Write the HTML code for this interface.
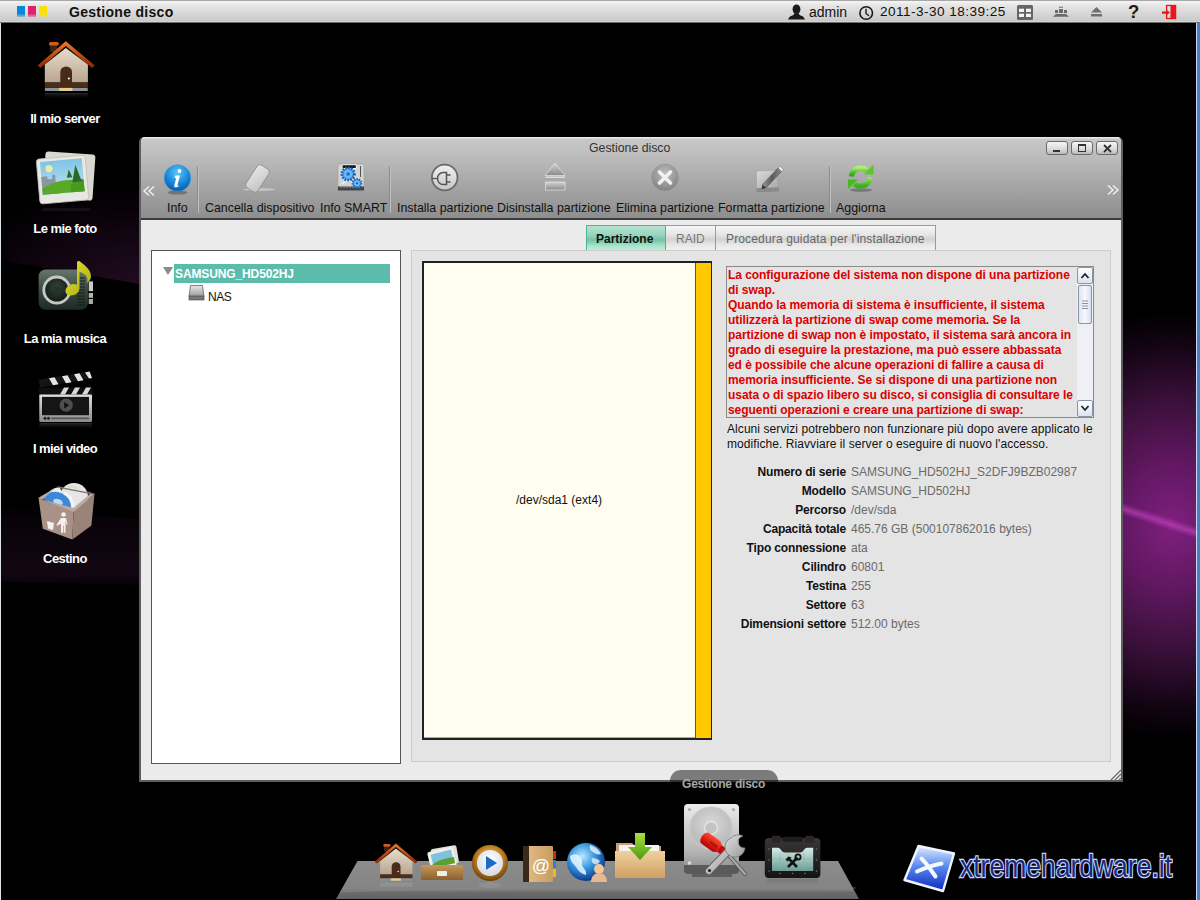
<!DOCTYPE html>
<html><head><meta charset="utf-8">
<style>
*{margin:0;padding:0;box-sizing:border-box}
html,body{width:1200px;height:900px;overflow:hidden;background:#000;font-family:"Liberation Sans",sans-serif}
.a{position:absolute}
svg{position:absolute;overflow:visible}
#bg{left:0;top:0;width:1200px;height:900px;background:#000}
#topbar{left:0;top:0;width:1200px;height:23px;background:linear-gradient(#a8a8a8 0,#a8a8a8 1px,#f4f4f4 1px,#e4e4e4 6px,#cacaca 21px,#dcdcdc 22px,#000 23px)}
.tt{font-size:14px;line-height:16px;color:#111;white-space:nowrap}
.dl{color:#fff;font-weight:bold;font-size:13px;letter-spacing:-0.55px;line-height:15px;width:130px;text-align:center;left:0;white-space:nowrap}
#win{left:139px;top:137px;width:984px;height:645px;background:#ebebeb;border:2px solid #5e5e5e;border-top:none;border-radius:5px 5px 0 0;overflow:hidden}
#tb{left:0;top:0;width:980px;height:83px;background:linear-gradient(#e8e8e8 0,#e8e8e8 1px,#c8c8c8 2px,#c2c2c2 12px,#a8a8a8 45px,#8e8e8e 81px,#3c3c3c 81px);border-radius:5px 5px 0 0}
.tl{font-size:12.4px;letter-spacing:0 !important;line-height:15px;color:#111;white-space:nowrap;top:201px}
.sep{width:2px;top:166px;height:47px;border-left:1px solid #8e8e8e;border-right:1px solid #c0c0c0}
.wb{top:141px;width:22px;height:14px;border:1px solid #6a6a6a;border-radius:3px;background:linear-gradient(#f6f6f6,#dadada 60%,#b8b8b8)}
.rt{color:#dc0000;font-weight:bold;font-size:12px;letter-spacing:-0.05px;line-height:15px;white-space:nowrap}
.pl{font-weight:bold;font-size:12px;letter-spacing:-0.15px;color:#111;text-align:right;width:140px;left:706px;line-height:15px;white-space:nowrap}
.pv{font-size:12px;color:#6a6a6a;left:851px;line-height:15px;white-space:nowrap}
</style></head><body>
<div id="bg" class="a"></div>
<!-- purple glow right -->
<div class="a" style="left:1100px;top:260px;width:100px;height:520px;background:radial-gradient(ellipse 180px 215px at 72% 51%,#801f80 0,#621862 28%,#3a103a 58%,#120412 85%,#000 100%)"></div>
<div class="a" style="left:1115px;top:495px;width:85px;height:50px;background:linear-gradient(18deg,transparent 42%,rgba(200,70,200,.6) 50%,transparent 58%)"></div>
<div class="a" style="left:0;top:170px;width:140px;height:114px;clip-path:polygon(0 0,100% 0,100% 100%,0 79%);background:radial-gradient(ellipse 190px 100px at 100% 100%,#200c20 0,#110511 50%,transparent 100%)"></div>
<div class="a" style="left:0;top:503px;width:140px;height:82px;clip-path:polygon(0 0,100% 20%,100% 100%,0 96%);background:linear-gradient(#000,#0a040a 30%,#120712 85%,#070207)"></div>
<!-- left/right screen edges -->
<div class="a" style="left:0;top:0;width:1px;height:900px;background:#dfe3ea"></div>
<div class="a" style="left:1196px;top:0;width:1px;height:900px;background:#cddbf0"></div>
<div class="a" style="left:1197px;top:0;width:3px;height:900px;background:#4b7fc4"></div>

<div id="topbar" class="a"></div>
<!-- topbar icons -->
<svg style="left:788px;top:4px" width="18" height="16"><ellipse cx="8.5" cy="5.3" rx="3.9" ry="4.9" fill="#1a1a1a"/><path d="M6 9.5h5l.5 1.5c2.5.8 4.2 1.8 4.8 3.2l.7 1.3H0l.7-1.3c.6-1.4 2.3-2.4 4.8-3.2z" fill="#1a1a1a"/></svg>
<svg style="left:858px;top:5px" width="17" height="16"><circle cx="8.2" cy="8" r="6.3" fill="none" stroke="#1a1a1a" stroke-width="1.6"/><path d="M8 3.8V8.5l3 2.2" fill="none" stroke="#1a1a1a" stroke-width="1.4"/></svg>
<svg style="left:1016px;top:4px" width="18" height="17"><rect x="1" y="1" width="16" height="15" rx="1.5" fill="#666"/><rect x="3" y="4.7" width="5" height="3.3" fill="#f2f2f2"/><rect x="10" y="4.7" width="5" height="3.3" fill="#f2f2f2"/><rect x="3" y="9.7" width="5" height="3.3" fill="#f2f2f2"/><rect x="10" y="9.7" width="5" height="3.3" fill="#f2f2f2"/></svg>
<svg style="left:1052px;top:5px" width="18" height="13"><rect x="7" y="1.7" width="4" height="1" fill="#6a6a6a"/><rect x="7" y="4" width="4" height="4" fill="#6a6a6a"/><rect x="3" y="5" width="3" height="3" fill="#6a6a6a"/><rect x="12" y="5" width="3" height="3" fill="#6a6a6a"/><path d="M4 9h10l3 2.7H1z" fill="#6a6a6a"/></svg>
<svg style="left:1090px;top:6px" width="14" height="12"><path d="M6.5 1L12 6.5H1z" fill="#707070"/><rect x="1" y="8" width="11" height="2.5" fill="#707070"/></svg>
<div class="a" style="left:1128px;top:2px;font-size:18.5px;font-weight:bold;line-height:19px;color:#1a1a1a">?</div>
<svg style="left:1161px;top:4px" width="17" height="16"><rect x="5.6" y="1.5" width="9" height="13" fill="none" stroke="#e8141e" stroke-width="1.3"/><rect x="9.5" y="1" width="5.5" height="14" fill="#e8141e"/><path d="M1 7.5h4V5.6l4 3-4 3.2V9.8H1z" fill="#e8141e"/></svg>

<!-- color squares -->
<div class="a" style="left:17px;top:6px;width:8px;height:11px;background:linear-gradient(#0a88d8 70%,rgba(10,136,216,.3))"></div>
<div class="a" style="left:28px;top:6px;width:8px;height:11px;background:linear-gradient(#e0206a 70%,rgba(224,32,106,.3))"></div>
<div class="a" style="left:39px;top:6px;width:8px;height:11px;background:linear-gradient(#fde000 70%,rgba(253,224,0,.3))"></div>
<div class="a tt" style="left:69px;top:4px;font-weight:bold;letter-spacing:0.3px">Gestione disco</div>
<div class="a tt" style="left:809px;top:4px">admin</div>
<div class="a tt" style="left:880px;top:4px;font-size:13.6px;letter-spacing:0.45px">2011-3-30 18:39:25</div>

<!-- desktop icons -->
<svg style="left:34px;top:38px" width="64" height="66">
 <defs>
  <linearGradient id="hr" x1="0" y1="0" x2="0" y2="1"><stop offset="0" stop-color="#f07a28"/><stop offset="1" stop-color="#8a2404"/></linearGradient>
  <linearGradient id="hb" x1="0" y1="0" x2="0" y2="1"><stop offset="0" stop-color="#e8dccb"/><stop offset="1" stop-color="#b8a690"/></linearGradient>
  <linearGradient id="hf" x1="0" y1="0" x2="0" y2="1"><stop offset="0" stop-color="#444" stop-opacity=".6"/><stop offset="1" stop-color="#000" stop-opacity="0"/></linearGradient>
 </defs>
 <rect x="16" y="7" width="7" height="7" fill="#3a2418"/>
 <rect x="15" y="4" width="9.8" height="3.5" rx="1.5" fill="#d05a20"/>
 <path d="M10.8 26.5L31.8 10 53.9 26.5V44.4H10.8z" fill="url(#hb)"/>
 <rect x="10.8" y="44.4" width="43.1" height="5.5" fill="#4a2e1a"/>
 <rect x="10.8" y="49.9" width="43.1" height="3.1" rx="1" fill="#8a929a"/>
 <rect x="25.2" y="49.9" width="13.2" height="3.1" fill="#e4cc90"/>
 <path d="M26.3 49V34a5.8 5.5 0 0 1 11.7 0v15z" fill="#4a2a18"/>
 <circle cx="34.9" cy="40.5" r="1" fill="#fff"/>
 <path d="M3.5 27.5L31.8 3.2 60.8 27.5 58 30 31.8 8 6.5 30z" fill="url(#hr)"/>
 <rect x="10.8" y="55" width="43.1" height="6" fill="url(#hf)"/>
</svg>
<svg style="left:34px;top:150px" width="64" height="64">
 <defs><linearGradient id="ps" x1="0" y1="0" x2="0" y2="1"><stop offset="0" stop-color="#7ec4e4"/><stop offset="1" stop-color="#bfe4f0"/></linearGradient></defs>
 <rect x="10" y="3" width="50" height="46" rx="3" fill="#d8d8d0" transform="rotate(4 35 26)"/>
 <g transform="rotate(-5 29 29)">
 <rect x="4" y="7" width="49" height="45" rx="3" fill="#e8e8e2" stroke="#c0c0b8" stroke-width=".8"/>
 <rect x="7.5" y="10" width="42" height="33" fill="url(#ps)"/>
 <circle cx="16" cy="17.5" r="3.5" fill="#f0eca8"/>
 <path d="M7.5 25h6v3h5v-4h3v8l4 3v8H7.5z" fill="#8a96a0"/>
 <path d="M7.5 43V37c10-6 24-8 42-5v11z" fill="#5aa828"/>
 <path d="M36 36c4-4 9-6 13.5-5v12H36z" fill="#4a9a20"/>
 <path d="M38 33l4.5-17 5 17z" fill="#2a6a28"/><path d="M33 28l2.5-8 3 8z" fill="#2a6a28"/>
 </g>
 <rect x="8" y="58" width="48" height="3" fill="#333" opacity=".3"/>
</svg>
<svg style="left:34px;top:259px" width="64" height="64">
 <defs><linearGradient id="rb" x1="0" y1="0" x2="0" y2="1"><stop offset="0" stop-color="#66766c"/><stop offset=".5" stop-color="#3a4a40"/><stop offset="1" stop-color="#1e2a24"/></linearGradient>
 <radialGradient id="rs" cx="50%" cy="40%" r="55%"><stop offset="0" stop-color="#34443a"/><stop offset="1" stop-color="#121c18"/></radialGradient>
 <linearGradient id="ny" x1="0" y1="0" x2="1" y2="1"><stop offset="0" stop-color="#e4e430"/><stop offset="1" stop-color="#a8a810"/></linearGradient></defs>
 <rect x="4.6" y="10.4" width="49.3" height="40.4" rx="7" fill="url(#rb)"/>
 <circle cx="22.8" cy="31" r="13" fill="url(#rs)" stroke="#c4c8c4" stroke-width="2.8"/>
 <circle cx="22.8" cy="31" r="3.4" fill="#26322c"/>
 <path d="M43 19h8M43 22h8M43 25h8M43 28h8M43 31h8M43 34h8M43 37h8M43 40h8M43 43h8M43 46h8" stroke="#141c18" stroke-width="1.2"/>
 <rect x="54.7" y="22.4" width="4.3" height="9.8" fill="#c8ccc8"/><rect x="54.7" y="34" width="4.3" height="4.8" fill="#b4b8b4"/><rect x="54.7" y="40" width="4.3" height="5" fill="#a4a8a4"/>
 <path d="M43 3.5c.5-1.5 2-1.8 3-1 5 4 11 8 11 15 0 3-2 5-4 6.5 1-4 0-7-3-9-2-1.5-4-2-4.5-2v16c0 4.5-4 7.5-8.5 7.5-3.5 0-5.5-2-5.5-4.5 0-4 4.5-7 8-7 1.3 0 2.5.3 3.5.8z" fill="url(#ny)"/>
</svg>
<svg style="left:34px;top:369px" width="64" height="66">
 <defs><linearGradient id="vf" x1="0" y1="0" x2="0" y2="1"><stop offset="0" stop-color="#e0e0e0"/><stop offset="1" stop-color="#8a8a8a"/></linearGradient>
 <linearGradient id="vr" x1="0" y1="0" x2="0" y2="1"><stop offset="0" stop-color="#555" stop-opacity=".5"/><stop offset="1" stop-color="#000" stop-opacity="0"/></linearGradient></defs>
 <path d="M4.6 10.8L56.7 2.2 58.2 9.2 6.1 18.6z" fill="#151515"/>
 <path d="M15 9.3l5.5-1 4 7-5.5 1zM28 7.2l5.5-1 4 7-5.5 1zM40 5.2l5.5-1 4 7-5.5 1zM51 3.4l4.5-.8 2.5 6.4-3 .5z" fill="#e4e4e4"/>
 <rect x="4.6" y="18.6" width="54" height="7" fill="#101010"/>
 <path d="M26 25.5l4-6.9h5l-4 6.9zM37 25.5l4-6.9h5l-4 6.9zM48 25.5l4-6.9h5l-4 6.9z" fill="#d8d8d8"/>
 <rect x="5.3" y="25.5" width="52.7" height="27.5" rx="1" fill="url(#vf)"/>
 <rect x="8" y="27.9" width="47" height="18.3" fill="#151515"/>
 <circle cx="32.2" cy="36.2" r="6.6" fill="#4e4e4e"/>
 <path d="M30.2 33v6.4l5-3.2z" fill="#111"/>
 <circle cx="11" cy="49.3" r="1.5" fill="#222"/><circle cx="14.5" cy="49.3" r="1.5" fill="#222"/>
 <rect x="17" y="48.5" width="38" height="1.6" fill="#555"/>
 <rect x="5.3" y="54" width="52.7" height="7" fill="url(#vr)"/>
</svg>
<svg style="left:34px;top:479px" width="64" height="66">
 <path d="M8 19L24 7 58 13 40 29z" fill="#3a2e2a"/>
 <path d="M14 14c3-4 8-6 12-5l4 9-14 5z" fill="#f0f0f0"/>
 <circle cx="40" cy="18" r="14" fill="#e6e6ea"/>
 <path d="M34 8a12 12 0 0 1 10 2" stroke="#c8e0a0" stroke-width="2" fill="none" opacity=".7"/>
 <path d="M9 20c3-6 10-9 18-6 6 2 10 8 10 14l-6 4z" fill="#3a88d8"/>
 <ellipse cx="24" cy="23" rx="5" ry="3" transform="rotate(20 24 23)" fill="#bcd8f4"/>
 <path d="M30 14c5 2 9 7 9 14" stroke="#f4f4f4" stroke-width="3" fill="none"/>
 <path d="M4.6 19.3L39.5 32.5 38.4 60.5 8.8 49.7z" fill="#a89288"/>
 <path d="M39.5 32.5L60.5 14.7 57.4 46.5 38.4 60.5z" fill="#9a847a"/>
 <path d="M4 19L22 8.5 8.5 20.5 39.5 29 56 15 60.8 14.5 39.5 33z" fill="#bca89e"/>
 <path d="M22 8.5L24 7.5 60.8 14.5 56 15z" fill="#8a766e"/>
 <circle cx="29.5" cy="35.5" r="2.3" fill="#f4f0ee"/>
 <path d="M27 39h5l1.5 6.5-1 .3-1-4v12h-1.8v-7h-.7v7H27v-9l-4 2-.4-1z" fill="#f4f0ee"/>
 <path d="M13 42l7 2-1 7-5-1.5z" fill="#f4f0ee"/>
</svg>

<div class="a dl" style="top:111px">Il mio server</div>
<div class="a dl" style="top:221px">Le mie foto</div>
<div class="a dl" style="top:331px">La mia musica</div>
<div class="a dl" style="top:441px">I miei video</div>
<div class="a dl" style="top:551px">Cestino</div>

<div id="win" class="a"><div id="tb" class="a"></div></div>
<!-- window title & buttons -->
<div class="a" style="left:589px;top:141px;font-size:12.3px;line-height:15px;color:#333;white-space:nowrap">Gestione disco</div>
<div class="a wb" style="left:1046px"></div>
<div class="a wb" style="left:1071px"></div>
<div class="a wb" style="left:1096px"></div>
<div class="a" style="left:1053px;top:150px;width:7px;height:2px;background:#333"></div>
<div class="a" style="left:1078px;top:144px;width:8px;height:8px;border:1px solid #333;border-top-width:2px"></div>
<svg style="left:1103px;top:144px" width="9" height="9"><path d="M1 1L8 8M8 1L1 8" stroke="#333" stroke-width="1.8"/></svg>
<!-- toolbar arrows -->
<svg style="left:142px;top:185px" width="16" height="12"><path d="M7 1.5L2 6l5 4.5M12 1.5L7 6l5 4.5" fill="none" stroke="#f2f2f2" stroke-width="1.4"/></svg>
<svg style="left:1105px;top:184px" width="16" height="12"><path d="M3 1.5L8 6l-5 4.5M8 1.5l5 4.5-5 4.5" fill="none" stroke="#f2f2f2" stroke-width="1.4"/></svg>
<!-- separators -->
<div class="a sep" style="left:197px"></div>
<div class="a sep" style="left:389px"></div>
<div class="a sep" style="left:829px"></div>
<!-- toolbar labels -->
<div class="a tl" style="left:167px">Info</div>
<div class="a tl" style="left:205px;letter-spacing:0.2px">Cancella dispositivo</div>
<div class="a tl" style="left:320px;letter-spacing:0.1px">Info SMART</div>
<div class="a tl" style="left:397px;letter-spacing:0.15px">Installa partizione</div>
<div class="a tl" style="left:497px;letter-spacing:0.15px">Disinstalla partizione</div>
<div class="a tl" style="left:616px;letter-spacing:0.15px">Elimina partizione</div>
<div class="a tl" style="left:718px;letter-spacing:0.15px">Formatta partizione</div>
<div class="a tl" style="left:836px;letter-spacing:0.2px">Aggiorna</div>
<!-- toolbar icons -->
<svg style="left:160px;top:162px" width="36" height="34">
 <defs><radialGradient id="gi" cx="50%" cy="30%" r="70%"><stop offset="0" stop-color="#5cc8f8"/><stop offset=".6" stop-color="#1a88d8"/><stop offset="1" stop-color="#0a58a8"/></radialGradient></defs>
 <ellipse cx="17.5" cy="30.5" rx="10" ry="2" fill="#555" opacity=".6"/>
 <circle cx="17.5" cy="16" r="13.3" fill="url(#gi)" stroke="#3aa0e0" stroke-width=".6"/>
 <circle cx="19.5" cy="9" r="1.9" fill="#fff"/>
 <path d="M15 13.5h5l-2.6 9.5c-.2.8.4.9 1.3.4l.3.6c-2.2 1.6-5.4 2-4.7-.8l2-7.3h-1.8z" fill="#fff"/>
</svg>
<svg style="left:240px;top:162px" width="40" height="32">
 <defs><linearGradient id="ge" x1="0" y1="0" x2="1" y2="1"><stop offset="0" stop-color="#e6e6e6"/><stop offset="1" stop-color="#c4c4c4"/></linearGradient></defs>
 <ellipse cx="19" cy="27.5" rx="16" ry="1.5" fill="#cfcfcf" opacity=".8"/>
 <rect x="10.5" y="3" width="14" height="27" rx="3.5" transform="rotate(33 17.5 16.5)" fill="url(#ge)" stroke="#8a8a8a" stroke-width=".8"/>
</svg>
<svg style="left:336px;top:162px" width="30" height="30">
 <rect x="2" y="2" width="26" height="26.5" rx="1.5" fill="#d4d4d4" stroke="#9a9a9a" stroke-width=".6"/>
 <rect x="5.8" y="2.5" width="14.8" height="4.2" rx="1" fill="#fff"/>
 <rect x="6.6" y="3.2" width="13.2" height="2.8" fill="#1a1a1a"/>
 <path d="M6 22c3-3 8-4 12-2" stroke="#f4f4f4" stroke-width="1.2" fill="none"/>
 <path d="M24.5 4v11" stroke="#444" stroke-width=".9"/>
 <rect x="2" y="24.5" width="26" height="4" fill="#444"/>
 <path d="M4 25.5h20" stroke="#777" stroke-width="1" stroke-dasharray="2 1"/>
 <circle cx="12.1" cy="12" r="6.3" fill="#4aa0f0" stroke="#1e5eb0" stroke-width="2.6" stroke-dasharray="1.6 1.3"/>
 <circle cx="12.1" cy="12" r="4.2" fill="#6ab8ff"/>
 <circle cx="12.1" cy="12" r="1.8" fill="#2a6ab8"/>
 <circle cx="21" cy="21.3" r="4.3" fill="#4aa0f0" stroke="#1e5eb0" stroke-width="2.2" stroke-dasharray="1.3 1.1"/>
 <circle cx="21" cy="21.3" r="2.6" fill="#7ac0ff"/>
 <circle cx="21" cy="21.3" r="1.2" fill="#2a6ab8"/>
</svg>
<svg style="left:430px;top:163px" width="30" height="30">
 <defs><linearGradient id="gp" x1="0" y1="0" x2="0" y2="1"><stop offset="0" stop-color="#f0f0f0"/><stop offset="1" stop-color="#c8c8c8"/></linearGradient></defs>
 <circle cx="14.7" cy="14.5" r="12.8" fill="url(#gp)" stroke="#6a6a6a" stroke-width="1.8"/>
 <path d="M2 15.5h6" stroke="#555" stroke-width="1.3"/>
 <path d="M16.5 9.5h-3.5a5.5 6 0 0 0 0 12h3.5z" fill="none" stroke="#555" stroke-width="1.5"/>
 <path d="M16.5 12h4M16.5 19h4" stroke="#555" stroke-width="1.5"/>
</svg>
<svg style="left:543px;top:161px" width="26" height="32">
 <defs><linearGradient id="gj" x1="0" y1="0" x2="0" y2="1"><stop offset="0" stop-color="#d4d4d4"/><stop offset="1" stop-color="#8a8a8a"/></linearGradient></defs>
 <path d="M12 2L22 14.5H2z" fill="url(#gj)" stroke="#e0e0e0" stroke-width=".8"/>
 <rect x="2.5" y="15.5" width="19.5" height="1.5" fill="#ddd"/>
 <rect x="2.5" y="21" width="19.5" height="8" fill="url(#gj)" stroke="#e0e0e0" stroke-width=".8"/>
</svg>
<svg style="left:650px;top:163px" width="30" height="30">
 <defs><radialGradient id="gx" cx="50%" cy="35%" r="65%"><stop offset="0" stop-color="#bdbdbd"/><stop offset="1" stop-color="#828282"/></radialGradient></defs>
 <circle cx="15" cy="14.5" r="13.5" fill="url(#gx)" stroke="#9a9a9a" stroke-width=".6"/>
 <path d="M9.5 9L20.5 20M20.5 9L9.5 20" stroke="#f2f2f2" stroke-width="3.6" stroke-linecap="round"/>
</svg>
<svg style="left:754px;top:164px" width="32" height="30">
 <defs><linearGradient id="fd" x1="0" y1="0" x2="1" y2="1"><stop offset="0" stop-color="#dcdcdc"/><stop offset="1" stop-color="#a8a8a8"/></linearGradient>
 <linearGradient id="fp" x1="0" y1="0" x2="1" y2="0"><stop offset="0" stop-color="#9a9a9a"/><stop offset=".5" stop-color="#5a5a5a"/><stop offset="1" stop-color="#8a8a8a"/></linearGradient></defs>
 <path d="M2.5 7L22 6 25 23.5 2.5 24.3z" fill="url(#fd)" stroke="#999" stroke-width=".5"/>
 <path d="M2.5 24.3L25 23.5V27.5L2.5 28.3z" fill="#8a8a8a"/>
 <path d="M6 20c2-5 6-9 12-10" stroke="#c4c4c4" stroke-width="1" fill="none"/>
 <path d="M8.5 20.5L24 4l3.5 3.5L12 24z" fill="url(#fp)" stroke="#555" stroke-width=".6"/>
 <path d="M8.5 20.5L7.5 25l4.5-1z" fill="#333"/>
 <path d="M24 4l2-2 3.5 3.5-2 2z" fill="#e8e8e8" stroke="#777" stroke-width=".5"/>
</svg>
<svg style="left:846px;top:162px" width="30" height="31">
 <defs><linearGradient id="gg" x1="0" y1="0" x2="0" y2="1"><stop offset="0" stop-color="#a8f070"/><stop offset=".5" stop-color="#50c020"/><stop offset="1" stop-color="#2a9a10"/></linearGradient>
 <linearGradient id="gg2" x1="0" y1="0" x2="0" y2="1"><stop offset="0" stop-color="#98e868"/><stop offset="1" stop-color="#38b018"/></linearGradient></defs>
 <ellipse cx="15" cy="28" rx="11" ry="1.8" fill="#444" opacity=".45"/>
 <path d="M5.5 14.5A9.5 9 0 0 1 21 8" fill="none" stroke="url(#gg)" stroke-width="5.2"/>
 <path d="M27.5 2.5V12.5H17.5z" fill="#5ac828"/>
 <path d="M24 15A9.5 9 0 0 1 8.5 22" fill="none" stroke="url(#gg2)" stroke-width="5.2"/>
 <path d="M2 27V17.5H12z" fill="#48b820"/>
</svg>

<!-- left tree panel -->
<div class="a" style="left:151px;top:250px;width:250px;height:514px;background:#fff;border:1px solid #555"></div>
<svg style="left:162px;top:266px" width="12" height="10"><path d="M1 1h10l-5 8z" fill="#8a8a8a"/></svg>
<div class="a" style="left:174px;top:264px;width:216px;height:19px;background:#5cbcab"></div>
<div class="a" style="left:175px;top:267px;font-size:12px;font-weight:bold;letter-spacing:-0.12px;line-height:15px;color:#fff;white-space:nowrap">SAMSUNG_HD502HJ</div>
<svg style="left:188px;top:284px" width="18" height="17">
 <defs><linearGradient id="gd" x1="0" y1="0" x2="0" y2="1"><stop offset="0" stop-color="#e8e8e8"/><stop offset="1" stop-color="#9a9a9a"/></linearGradient></defs>
 <path d="M2.5 1.5h12l1.5 11h-15z" fill="url(#gd)" stroke="#666" stroke-width=".8"/>
 <rect x="1" y="12" width="15" height="4" fill="#777" stroke="#444" stroke-width=".6"/>
</svg>
<div class="a" style="left:208px;top:290px;font-size:12px;letter-spacing:-0.4px;line-height:15px;color:#111">NAS</div>

<!-- tabs -->
<div class="a" style="left:586px;top:225px;width:80px;height:26px;border:1px solid #4fb495;border-bottom:none;background:linear-gradient(#b4e2d0,#9ad6bf 35%,#74c4a4 55%,#a8e4cc 80%,#c4f2de)"></div>
<div class="a" style="left:596px;top:232px;font-size:12px;font-weight:bold;line-height:15px;color:#111">Partizione</div>
<div class="a" style="left:666px;top:225px;width:50px;height:25px;border:1px solid #9a9a9a;border-left:none;border-bottom:none;background:linear-gradient(#f6f6f6,#e6e6e6 35%,#d2d2d2 55%,#e8e8e8 80%,#f2f2f2)"></div>
<div class="a" style="left:676px;top:232px;font-size:12px;line-height:15px;color:#777">RAID</div>
<div class="a" style="left:715px;top:225px;width:221px;height:25px;border:1px solid #9a9a9a;border-bottom:none;background:linear-gradient(#f6f6f6,#e6e6e6 35%,#d2d2d2 55%,#e8e8e8 80%,#f2f2f2)"></div>
<div class="a" style="left:726px;top:232px;font-size:12px;letter-spacing:0.15px;line-height:15px;color:#666;white-space:nowrap">Procedura guidata per l'installazione</div>

<!-- right panel -->
<div class="a" style="left:411px;top:250px;width:700px;height:512px;background:#e4e4e4;border:1px solid #cdcdcd"></div>
<!-- partition box -->
<div class="a" style="left:422px;top:261px;width:290px;height:479px;background:#fffcf0;border:1px solid #222;border-width:2px 1px 2px 2px"></div>
<div class="a" style="left:695px;top:263px;width:16px;height:475px;background:#ffc800;border-left:1px solid #555"></div>
<div class="a" style="left:424px;top:737px;width:271px;height:1px;background:#aaa"></div>
<div class="a" style="left:516px;top:493px;font-size:12px;line-height:15px;color:#111;white-space:nowrap">/dev/sda1 (ext4)</div>

<!-- red textarea -->
<div class="a" style="left:726px;top:266px;width:368px;height:152px;border:1px solid #8a8a8a;background:#e4e4e4"></div>
<div class="a" style="left:1077px;top:267px;width:16px;height:150px;background:#eef0f6"></div>
<div class="a" style="left:1077px;top:267px;width:16px;height:17px;border:1px solid #8a94a8;border-radius:2px;background:linear-gradient(#fff,#dde2ee)"></div>
<div class="a" style="left:1077px;top:400px;width:16px;height:17px;border:1px solid #8a94a8;border-radius:2px;background:linear-gradient(#fff,#dde2ee)"></div>
<div class="a" style="left:1078px;top:285px;width:14px;height:39px;border:1px solid #8a94a8;border-radius:2px;background:linear-gradient(90deg,#dfe4f2,#f8f9fc 50%,#d8deee)"></div>
<svg style="left:1077px;top:267px" width="16" height="150">
 <path d="M4.5 11l3.5-4 3.5 4" fill="none" stroke="#222" stroke-width="1.8"/>
 <path d="M4.5 139l3.5 4 3.5-4" fill="none" stroke="#222" stroke-width="1.8"/>
 <path d="M5 34h6M5 36.5h6M5 39h6M5 41.5h6" stroke="#8a94a8" stroke-width="1"/>
</svg>
<div class="a rt" style="left:728px;top:268px">La configurazione del sistema non dispone di una partizione<br>di swap.<br>Quando la memoria di sistema è insufficiente, il sistema<br>utilizzerà la partizione di swap come memoria. Se la<br>partizione di swap non è impostato, il sistema sarà ancora in<br>grado di eseguire la prestazione, ma può essere abbassata<br>ed è possibile che alcune operazioni di fallire a causa di<br>memoria insufficiente. Se si dispone di una partizione non<br>usata o di spazio libero su disco, si consiglia di consultare le<br>seguenti operazioni e creare una partizione di swap:</div>
<div class="a" style="left:727px;top:422px;font-size:12px;letter-spacing:0.07px;line-height:15px;color:#111;white-space:nowrap">Alcuni servizi potrebbero non funzionare più dopo avere applicato le<br>modifiche. Riavviare il server o eseguire di nuovo l'accesso.</div>

<!-- properties -->
<div class="a pl" style="top:465px">Numero di serie</div><div class="a pv" style="top:465px">SAMSUNG_HD502HJ_S2DFJ9BZB02987</div>
<div class="a pl" style="top:484px">Modello</div><div class="a pv" style="top:484px">SAMSUNG_HD502HJ</div>
<div class="a pl" style="top:503px">Percorso</div><div class="a pv" style="top:503px">/dev/sda</div>
<div class="a pl" style="top:522px">Capacità totale</div><div class="a pv" style="top:522px">465.76 GB (500107862016 bytes)</div>
<div class="a pl" style="top:541px">Tipo connessione</div><div class="a pv" style="top:541px">ata</div>
<div class="a pl" style="top:560px">Cilindro</div><div class="a pv" style="top:560px">60801</div>
<div class="a pl" style="top:579px">Testina</div><div class="a pv" style="top:579px">255</div>
<div class="a pl" style="top:598px">Settore</div><div class="a pv" style="top:598px">63</div>
<div class="a pl" style="top:617px">Dimensioni settore</div><div class="a pv" style="top:617px">512.00 bytes</div>
<!-- resize grip -->
<svg style="left:1108px;top:767px" width="14" height="14"><path d="M13 3L3 13M13 7L7 13M13 11L11 13" stroke="#666" stroke-width="1.2"/></svg>

<!-- dock -->
<svg style="left:0;top:0" width="1200" height="900">
 <defs>
  <linearGradient id="sh" x1="0" y1="0" x2="0" y2="1"><stop offset="0" stop-color="#8c8c8c"/><stop offset=".74" stop-color="#848484"/><stop offset=".78" stop-color="#7a7a7a"/><stop offset=".82" stop-color="#6c6c6c"/><stop offset="1" stop-color="#626262"/></linearGradient>
 </defs>
 <path d="M357.5 861H838L859 899H336z" fill="url(#sh)"/><path d="M340 892c150-6 350-6 516-4" stroke="#8a8a8a" stroke-width="1" fill="none" opacity=".6"/>
</svg>
<!-- tooltip -->
<div class="a" style="left:670px;top:770px;width:108px;height:22px;border-radius:11px 11px 0 0;background:rgba(0,0,0,.48)"></div>
<div class="a" style="left:682px;top:777px;font-size:12px;font-weight:bold;letter-spacing:-0.2px;line-height:15px;color:#a8a8a8;white-space:nowrap">Gestione disco</div>
<!-- dock icons -->
<svg style="left:371.7px;top:841.4px" width="50" height="50"><g transform="scale(.75)">
 <rect x="16" y="7" width="7" height="7" fill="#3a2418"/>
 <rect x="15" y="4" width="9.8" height="3.5" rx="1.5" fill="#d05a20"/>
 <path d="M10.8 26.5L31.8 10 53.9 26.5V44.4H10.8z" fill="url(#hb)"/>
 <rect x="10.8" y="44.4" width="43.1" height="5.5" fill="#4a2e1a"/>
 <rect x="10.8" y="49.9" width="43.1" height="3.1" rx="1" fill="#8a929a"/>
 <rect x="25.2" y="49.9" width="13.2" height="3.1" fill="#e4cc90"/>
 <path d="M26.3 49V34a5.8 5.5 0 0 1 11.7 0v15z" fill="#4a2a18"/>
 <circle cx="34.9" cy="40.5" r="1" fill="#fff"/>
 <path d="M3.5 27.5L31.8 3.2 60.8 27.5 58 30 31.8 8 6.5 30z" fill="url(#hr)"/>
 <rect x="10.8" y="55" width="43.1" height="6" fill="#aaa" opacity=".35"/>
</g></svg>
<svg style="left:420px;top:845px" width="46" height="42">
 <defs><linearGradient id="dw" x1="0" y1="0" x2="0" y2="1"><stop offset="0" stop-color="#c89858"/><stop offset="1" stop-color="#8a6030"/></linearGradient></defs>
 <rect x="12" y="2" width="26" height="18" rx="2" fill="#e0e0d8" transform="rotate(-10 25 12)"/>
 <rect x="9" y="4" width="26" height="20" rx="2" fill="#f0f0e8" transform="rotate(-14 22 14)"/>
 <rect x="12" y="7" width="21" height="14" fill="#80c0e0" transform="rotate(-14 22 14)"/>
 <path d="M12 20c6-5 14-7 22-8l1 6-22 5z" fill="#5aa030"/>
 <path d="M1 20h42v15H1z" fill="url(#dw)"/>
 <rect x="17" y="26" width="10" height="5" rx="1" fill="#eee"/>
 <rect x="3" y="37" width="38" height="3" fill="#888" opacity=".4"/>
</svg>
<svg style="left:470px;top:844px" width="40" height="46">
 <defs><radialGradient id="gr" cx="50%" cy="40%" r="60%"><stop offset="0" stop-color="#f8e0a0"/><stop offset=".6" stop-color="#c08020"/><stop offset="1" stop-color="#6a4008"/></radialGradient>
 <radialGradient id="gw" cx="50%" cy="35%" r="60%"><stop offset="0" stop-color="#fff"/><stop offset="1" stop-color="#d8dce4"/></radialGradient></defs>
 <circle cx="20" cy="19" r="18" fill="url(#gr)"/>
 <circle cx="20" cy="19" r="13" fill="url(#gw)"/>
 <path d="M16 12v14l11-7z" fill="#1a6ac8"/>
 <ellipse cx="20" cy="41" rx="12" ry="3" fill="#aaa" opacity=".3"/>
</svg>
<svg style="left:522px;top:845px" width="36" height="40">
 <defs><linearGradient id="ab" x1="0" y1="0" x2="1" y2="0"><stop offset="0" stop-color="#e4c088"/><stop offset="1" stop-color="#c89c60"/></linearGradient></defs>
 <rect x="1" y="1" width="30" height="36" rx="1" fill="url(#ab)"/>
 <rect x="1" y="1" width="6" height="36" fill="#3a2a1a"/>
 <rect x="31" y="6" width="3" height="8" fill="#c03020"/><rect x="31" y="15" width="3" height="8" fill="#3a80c0"/><rect x="31" y="24" width="3" height="8" fill="#e0c020"/>
 <text x="19" y="27" font-family="Liberation Sans" font-size="18" fill="#fff" text-anchor="middle">@</text>
</svg>
<svg style="left:566px;top:842px" width="44" height="46">
 <defs><radialGradient id="gb" cx="40%" cy="35%" r="65%"><stop offset="0" stop-color="#b8e8ff"/><stop offset=".5" stop-color="#3a98e0"/><stop offset="1" stop-color="#0a3a8a"/></radialGradient></defs>
 <circle cx="20" cy="20" r="19" fill="url(#gb)"/>
 <path d="M4 14c4-3 9-2 11 2 2 3 0 6 2 9 1 2 4 4 3 8-4-1-8-4-10-8-2-3-6-5-6-11z" fill="#e8f4ff" opacity=".85"/><path d="M24 3c4 1 9 4 11 9-3 1-6 0-8-2-2-1-4-3-3-7z" fill="#f0f8ff" opacity=".8"/><path d="M26 16c3 0 6 1 8 3-1 3-4 4-6 3-2-1-3-4-2-6z" fill="#dff0ff" opacity=".8"/>
 <circle cx="33" cy="27" r="5" fill="#f0c8a0"/>
 <path d="M25 40c0-6 4-9 8-9s8 3 8 9z" fill="#e8b890"/>
</svg>
<svg style="left:613px;top:831px" width="56" height="50">
 <defs><linearGradient id="fo" x1="0" y1="0" x2="0" y2="1"><stop offset="0" stop-color="#f0d0a0"/><stop offset="1" stop-color="#d0a060"/></linearGradient>
 <linearGradient id="ga" x1="0" y1="0" x2="0" y2="1"><stop offset="0" stop-color="#a8e040"/><stop offset="1" stop-color="#4a9a10"/></linearGradient></defs>
 <path d="M3 12h16l3 3h26v31H3z" fill="#c8a070"/>
 <rect x="6" y="14" width="40" height="10" fill="#f4f4f0"/>
 <path d="M2 20h50v27H2z" fill="url(#fo)" rx="3"/>
 <path d="M22 2h10v14h7L27 29 15 16h7z" fill="url(#ga)"/>
</svg>
<svg style="left:682px;top:802px" width="72" height="80">
 <defs><linearGradient id="hd" x1="0" y1="0" x2="0" y2="1"><stop offset="0" stop-color="#ececec"/><stop offset=".7" stop-color="#b4b4b4"/><stop offset="1" stop-color="#8a8a8a"/></linearGradient>
 <linearGradient id="rd" x1="0" y1="0" x2="0" y2="1"><stop offset="0" stop-color="#ff4a30"/><stop offset="1" stop-color="#b40000"/></linearGradient>
 <radialGradient id="pl" cx="50%" cy="40%" r="60%"><stop offset="0" stop-color="#d8d8d8"/><stop offset="1" stop-color="#b8b8b8"/></radialGradient>
 <linearGradient id="wr" x1="0" y1="0" x2="1" y2="1"><stop offset="0" stop-color="#e0e0e0"/><stop offset="1" stop-color="#9a9a9a"/></linearGradient></defs>
 <rect x="2" y="2" width="55" height="68" rx="4" fill="url(#hd)"/>
 <circle cx="7.5" cy="7.5" r="1.6" fill="#aaa"/><circle cx="51.5" cy="7.5" r="1.6" fill="#aaa"/><circle cx="7.5" cy="61" r="1.8" fill="#ddd"/>
 <circle cx="29" cy="26" r="21" fill="url(#pl)" stroke="#c8c8c8" stroke-width="1.2"/>
 <circle cx="29" cy="26" r="6.5" fill="#c4c4c4" stroke="#e4e4e4" stroke-width="1.4"/>
 <path d="M2 63h55v5a4 4 0 0 1-4 4H6a4 4 0 0 1-4-4z" fill="#5a5a5a"/>
 <rect x="10" y="72" width="40" height="3" fill="#444" opacity=".6"/>
 <path d="M44 50L63 72" stroke="#555" stroke-width="4" stroke-linecap="round"/>
 <path d="M44 50L63 72" stroke="#a8a8a8" stroke-width="2.4" stroke-linecap="round"/>
 <g transform="translate(20 34) rotate(36)"><path d="M4 -6.5H18L21 -4.5V4.5L18 6.5H4A4 6.5 0 0 1 4 -6.5z" fill="url(#rd)"/><rect x="21" y="-4" width="6" height="8" fill="#c80808"/><rect x="10" y="-1.2" width="9" height="2.4" fill="#a00000" opacity=".6"/></g>
 <path d="M27 69L53 42" stroke="#666" stroke-width="8" stroke-linecap="round"/>
 <path d="M27 69L53 42" stroke="url(#wr)" stroke-width="6" stroke-linecap="round"/>
 <circle cx="27.5" cy="68.5" r="1.6" fill="#222"/>
 <path d="M49 36a10 10 0 1 0 14 10c-3 0-5-1-6-3l-1-4c0-2 2-4 5-5a10 10 0 0 0-12 2z" fill="url(#wr)" stroke="#777" stroke-width=".8"/>
</svg>
<svg style="left:762px;top:833px" width="62" height="54">
 <defs><linearGradient id="tk" x1="0" y1="0" x2="0" y2="1"><stop offset="0" stop-color="#d4ece6"/><stop offset="1" stop-color="#6a9c94"/></linearGradient>
 <linearGradient id="tc" x1="0" y1="0" x2="0" y2="1"><stop offset="0" stop-color="#3a3636"/><stop offset="1" stop-color="#141212"/></linearGradient>
 <linearGradient id="tr" x1="0" y1="0" x2="0" y2="1"><stop offset="0" stop-color="#666" stop-opacity=".45"/><stop offset="1" stop-color="#666" stop-opacity="0"/></linearGradient></defs>
 <rect x="2.8" y="5" width="55.6" height="40" rx="4" fill="url(#tc)"/>
 <rect x="9.6" y="2.8" width="9.4" height="7" rx="2" fill="#2a2626"/><rect x="42.9" y="2.8" width="9.4" height="7" rx="2" fill="#2a2626"/>
 <rect x="20" y="3.8" width="21" height="5" rx="2" fill="#1e1c1c"/>
 <path d="M10 14.8h6c3 0 3 4.7 7 4.7h15c4 0 4-4.7 7-4.7h6.2v23.1H10z" fill="url(#tk)"/>
 <path d="M18 20v18M26 20v18M34 20v18M42 20v18M10 26h41M10 32h41" stroke="#88b0a8" stroke-width=".5"/>
 <path d="M26 34l9.5-9.5M35 34l-9-9" stroke="#111" stroke-width="2.6"/>
 <path d="M23.5 26.5l3-3 3 1-4 4z" fill="#111"/>
 <circle cx="36" cy="24" r="2.6" fill="none" stroke="#111" stroke-width="1.8"/>
 <g fill="#777"><circle cx="7" cy="16" r=".8"/><circle cx="7" cy="27" r=".8"/><circle cx="7" cy="38" r=".8"/><circle cx="54.5" cy="16" r=".8"/><circle cx="54.5" cy="27" r=".8"/><circle cx="54.5" cy="38" r=".8"/><circle cx="18" cy="40.5" r=".8"/><circle cx="30.5" cy="40.5" r=".8"/><circle cx="43" cy="40.5" r=".8"/></g>
 <rect x="5" y="46" width="51" height="6" fill="url(#tr)"/>
</svg>
<!-- logo -->
<svg style="left:900px;top:842px" width="280" height="56">
 <defs><linearGradient id="lx" x1="0" y1="0" x2="0" y2="1"><stop offset="0" stop-color="#e0ecff"/><stop offset=".45" stop-color="#5a8af0"/><stop offset="1" stop-color="#0a28c0"/></linearGradient></defs>
  <path d="M18.5 4L54 11.5 43 49 4.5 38z" fill="url(#lx)" stroke="#f0f4ff" stroke-width="2.4" stroke-linejoin="round"/>
 <path d="M17 29.5C25 26 33 23 41.5 21.5M21.5 16.5C27 22 31 28 35.5 34.5" stroke="#f4f8ff" stroke-width="4" fill="none" stroke-linecap="round"/>
 <text x="60" y="35.3" font-family="Liberation Sans" font-size="32" textLength="212" lengthAdjust="spacingAndGlyphs" fill="#182a80" stroke="#d0d8f4" stroke-width="2.4" paint-order="stroke">xtremehardware.it</text>
</svg>

</body></html>
